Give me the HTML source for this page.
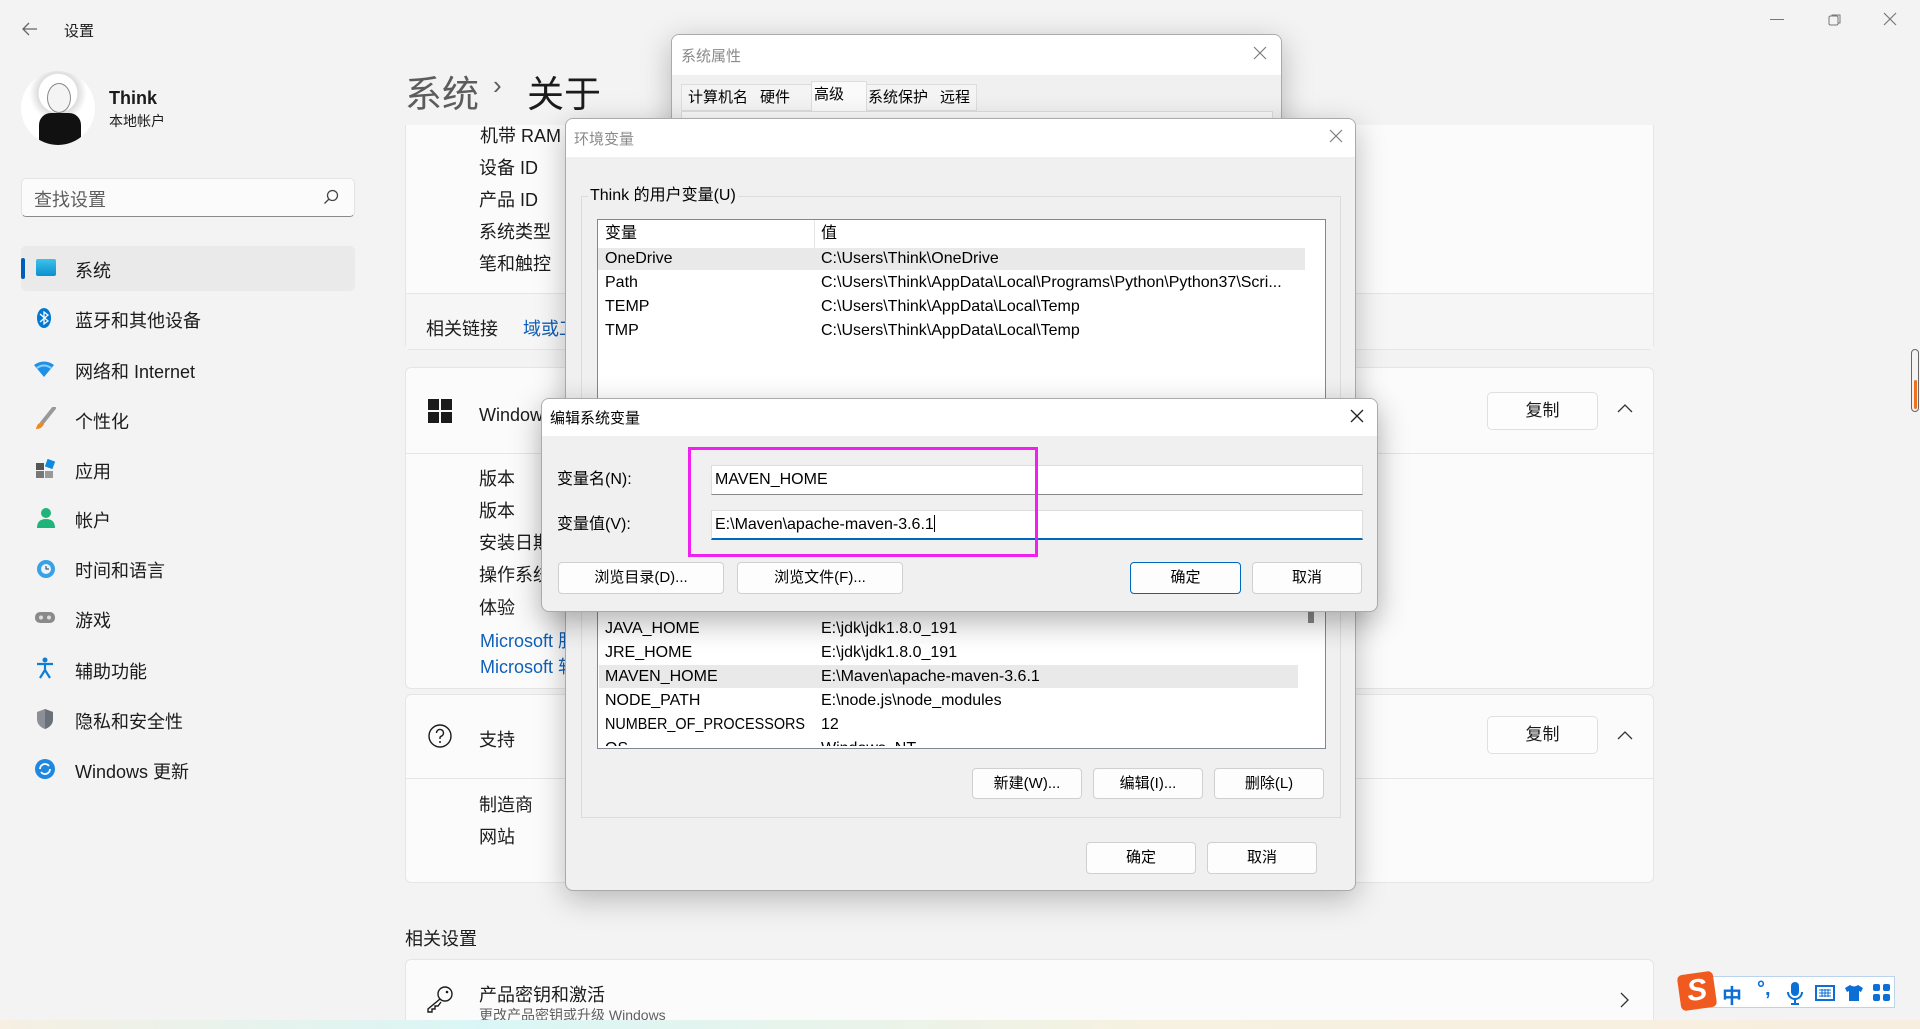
<!DOCTYPE html>
<html><head><meta charset="utf-8">
<style>
*{margin:0;padding:0;box-sizing:border-box}
html{overflow:hidden;width:1920px;height:1029px}
body{width:1920px;height:1029px;overflow:hidden;background:#f3f3f3;font-family:"Liberation Sans","Noto Sans CJK SC",sans-serif;color:#1b1b1b;position:relative}
.a{position:absolute;white-space:nowrap}
.card{position:absolute;background:#fbfbfb;border:1px solid #e5e5e5;border-radius:6px}
.t18{font-size:18px}
.nav{position:absolute;left:75px;font-size:18px}
.btnw{position:absolute;background:#fdfdfd;border:1px solid #e0e0e0;border-radius:5px;font-size:17px;text-align:center}
.dlg{position:absolute;background:#f0f0f0;border:1px solid #aaa;border-radius:8px;overflow:hidden;box-shadow:0 8px 30px rgba(0,0,0,.25)}
.tb{position:absolute;left:0;right:0;top:0;background:#fff}
.dt{font-size:16px;color:#000;line-height:20px}
.wb{position:absolute;background:#fdfdfd;border:1px solid #d0d0d0;border-radius:4px;font-size:15px;text-align:center;color:#000}
</style></head><body>

<!-- title bar -->
<svg class="a" style="left:22px;top:22px" width="16" height="14"><path d="M15 7H2M7 1L1 7l6 6" stroke="#666" stroke-width="1.3" fill="none"/></svg>
<div class="a" style="left:64px;top:20px;font-size:15px">设置</div>
<div class="a" style="left:1770px;top:19px;width:14px;height:1px;background:#777"></div>
<svg class="a" style="left:1828px;top:13px" width="14" height="14"><rect x="1" y="3" width="9" height="9" rx="1.5" fill="none" stroke="#777"/><path d="M4 3V2h8v8h-2" fill="none" stroke="#777"/></svg>
<svg class="a" style="left:1883px;top:12px" width="14" height="14"><path d="M1 1l12 12M13 1L1 13" stroke="#777" stroke-width="1.2"/></svg>

<!-- profile -->
<div class="a" style="left:21px;top:71px;width:74px;height:74px;border-radius:50%;background:radial-gradient(circle at 50% 30%,#fff 0 30%,#ddd 31%,#fff 45%),#eee;overflow:hidden">
<div style="position:absolute;left:18px;top:42px;width:42px;height:40px;background:#111;border-radius:12px 12px 0 0"></div>
<div style="position:absolute;left:26px;top:12px;width:24px;height:30px;background:#f4f4f4;border:1px solid #888;border-radius:50%"></div></div>
<div class="a" style="left:109px;top:88px;font-size:18px;font-weight:bold">Think</div>
<div class="a" style="left:109px;top:111px;font-size:14px">本地帐户</div>

<!-- search -->
<div class="a" style="left:21px;top:178px;width:334px;height:39px;background:#fbfbfb;border:1px solid #e3e3e3;border-bottom:1px solid #8a8a8a;border-radius:5px"></div>
<div class="a" style="left:34px;top:186px;font-size:18px;color:#5f5f5f">查找设置</div>
<svg class="a" style="left:323px;top:189px" width="16" height="16"><circle cx="9.5" cy="6.5" r="5" fill="none" stroke="#444" stroke-width="1.3"/><path d="M6 10L1.5 14.5" stroke="#444" stroke-width="1.3"/></svg>

<!-- nav -->
<div class="a" style="left:21px;top:246px;width:334px;height:45px;background:#eaeaea;border-radius:5px"></div>
<div class="a" style="left:21px;top:258px;width:4px;height:21px;background:#005fb8;border-radius:2px"></div>
<div class="a" style="left:36px;top:259px;width:20px;height:17px;background:linear-gradient(#3cc3e8,#0a8fd0);border-radius:2px"></div>
<div class="nav" style="top:257px">系统</div>
<svg class="a" style="left:36px;top:307px" width="16" height="22"><ellipse cx="8" cy="11" rx="7" ry="10" fill="#0078d4"/><path d="M4 7l8 7-4 3V5l4 3-8 7" stroke="#fff" stroke-width="1.3" fill="none"/></svg>
<div class="nav" style="top:307px">蓝牙和其他设备</div>
<svg class="a" style="left:33px;top:360px" width="22" height="18"><path d="M1 5Q11-2 21 5L11 17Z" fill="#1e90e8"/><path d="M4 8Q11 3 18 8" stroke="#8fd0ff" stroke-width="2" fill="none"/></svg>
<div class="nav" style="top:358px">网络和 Internet</div>
<svg class="a" style="left:34px;top:407px" width="22" height="24"><path d="M20 1L8 16" stroke="#999" stroke-width="4" stroke-linecap="round"/><path d="M8 15Q3 16 2 22Q8 22 10 17Z" fill="#f08a1e"/></svg>
<div class="nav" style="top:408px">个性化</div>
<svg class="a" style="left:36px;top:459px" width="20" height="20"><rect x="0" y="4" width="8" height="7" fill="#555"/><rect x="0" y="12" width="8" height="7" fill="#777"/><rect x="9" y="12" width="8" height="7" fill="#999"/><rect x="10" y="1" width="8" height="8" fill="#0a8ae0" transform="rotate(20 14 5)"/></svg>
<div class="nav" style="top:458px">应用</div>
<svg class="a" style="left:36px;top:507px" width="20" height="22"><circle cx="10" cy="6" r="5" fill="#1fb57a"/><path d="M1 21Q1 12 10 12Q19 12 19 21Z" fill="#1fb57a"/></svg>
<div class="nav" style="top:507px">帐户</div>
<svg class="a" style="left:35px;top:558px" width="22" height="22"><circle cx="11" cy="11" r="9" fill="#3aa0e8"/><circle cx="11" cy="11" r="5" fill="#e8f4ff"/><path d="M11 8v3h3" stroke="#333" fill="none"/></svg>
<div class="nav" style="top:557px">时间和语言</div>
<svg class="a" style="left:34px;top:610px" width="22" height="16"><rect x="1" y="2" width="20" height="11" rx="5" fill="#8a8a8a"/><circle cx="7" cy="7.5" r="2" fill="#ddd"/><circle cx="15" cy="7.5" r="2" fill="#ddd"/></svg>
<div class="nav" style="top:607px">游戏</div>
<svg class="a" style="left:35px;top:657px" width="20" height="22"><circle cx="10" cy="3" r="2.5" fill="#0a7ed8"/><path d="M2 7h16M10 7v6l-5 8M10 13l5 8" stroke="#0a7ed8" stroke-width="2.2" fill="none"/></svg>
<div class="nav" style="top:658px">辅助功能</div>
<svg class="a" style="left:36px;top:708px" width="18" height="22"><path d="M9 1L1 4v7q0 7 8 10q8-3 8-10V4Z" fill="#8a8f98"/><path d="M9 1v20q8-3 8-10V4Z" fill="#6b7079"/></svg>
<div class="nav" style="top:708px">隐私和安全性</div>
<svg class="a" style="left:34px;top:758px" width="22" height="22"><circle cx="11" cy="11" r="10" fill="#1e88e0"/><path d="M6 11a5 5 0 0 1 9-3M16 11a5 5 0 0 1-9 3" stroke="#fff" stroke-width="1.8" fill="none"/></svg>
<div class="nav" style="top:758px">Windows 更新</div>

<!-- card 1 -->
<div class="card" style="left:405px;top:125px;width:1249px;height:225px;border-top:none;border-radius:0 0 6px 6px;overflow:hidden">
<div class="a t18" style="left:74px;top:-3px">机带 RAM</div>
</div>
<div class="a" style="left:406px;top:293px;width:1247px;height:56px;background:#f6f6f6;border-top:1px solid #e5e5e5"></div>
<div class="a t18" style="left:479px;top:154px">设备 ID</div>
<div class="a t18" style="left:479px;top:186px">产品 ID</div>
<div class="a t18" style="left:479px;top:218px">系统类型</div>
<div class="a t18" style="left:479px;top:250px">笔和触控</div>
<div class="a t18" style="left:426px;top:315px">相关链接</div>
<div class="a t18" style="left:523px;top:315px;color:#0f5fb8">域或工作组</div>

<!-- heading -->
<div class="a" style="left:405px;top:64px;font-size:37px;color:#5c5c5c">系统</div>
<div class="a" style="left:493px;top:70px;font-size:26px;color:#5c5c5c">›</div>
<div class="a" style="left:527px;top:64px;font-size:37px;color:#1b1b1b">关于</div>

<!-- card 2 -->
<div class="card" style="left:405px;top:367px;width:1249px;height:322px"></div>
<div class="a" style="left:406px;top:453px;width:1247px;height:1px;background:#e5e5e5"></div>
<svg class="a" style="left:428px;top:399px" width="24" height="24"><rect x="0" y="0" width="11" height="11" fill="#1b1b1b"/><rect x="13" y="0" width="11" height="11" fill="#1b1b1b"/><rect x="0" y="13" width="11" height="11" fill="#1b1b1b"/><rect x="13" y="13" width="11" height="11" fill="#1b1b1b"/></svg>
<div class="a t18" style="left:479px;top:401px">Windows 规格</div>
<div class="btnw" style="left:1487px;top:392px;width:111px;height:38px;line-height:36px">复制</div>
<svg class="a" style="left:1617px;top:403px" width="16" height="10"><path d="M1 9l7-7 7 7" stroke="#333" stroke-width="1.3" fill="none"/></svg>
<div class="a t18" style="left:479px;top:465px">版本</div>
<div class="a t18" style="left:479px;top:497px">版本</div>
<div class="a t18" style="left:479px;top:529px">安装日期</div>
<div class="a t18" style="left:479px;top:561px">操作系统版本</div>
<div class="a t18" style="left:479px;top:594px">体验</div>
<div class="a t18" style="left:480px;top:627px;color:#0f5fb8">Microsoft 服务协议</div>
<div class="a t18" style="left:480px;top:653px;color:#0f5fb8">Microsoft 软件许可条款</div>

<!-- card 3 -->
<div class="card" style="left:405px;top:694px;width:1249px;height:189px"></div>
<div class="a" style="left:406px;top:778px;width:1247px;height:1px;background:#e5e5e5"></div>
<svg class="a" style="left:428px;top:724px" width="24" height="24"><circle cx="12" cy="12" r="11" fill="none" stroke="#1b1b1b" stroke-width="1.4"/><path d="M8.5 9a3.5 3.5 0 1 1 4.5 3.3c-.8.3-1 .8-1 1.7v1" stroke="#1b1b1b" stroke-width="1.4" fill="none"/><circle cx="12" cy="18" r="1" fill="#1b1b1b"/></svg>
<div class="a t18" style="left:479px;top:726px">支持</div>
<div class="btnw" style="left:1487px;top:716px;width:111px;height:38px;line-height:36px">复制</div>
<svg class="a" style="left:1617px;top:730px" width="16" height="10"><path d="M1 9l7-7 7 7" stroke="#333" stroke-width="1.3" fill="none"/></svg>
<div class="a t18" style="left:479px;top:791px">制造商</div>
<div class="a t18" style="left:479px;top:823px">网站</div>

<div class="a t18" style="left:405px;top:925px">相关设置</div>
<div class="card" style="left:405px;top:959px;width:1249px;height:62px;border-bottom:none;border-radius:6px 6px 0 0"></div>
<svg class="a" style="left:426px;top:985px" width="28" height="28"><circle cx="19" cy="9" r="7" fill="none" stroke="#1b1b1b" stroke-width="1.4"/><circle cx="21" cy="7" r="1.3" fill="#1b1b1b"/><path d="M14 14L2 24v3h4v-3h3v-3h3l3-4" stroke="#1b1b1b" stroke-width="1.4" fill="none"/></svg>
<div class="a t18" style="left:479px;top:981px">产品密钥和激活</div>
<div class="a" style="left:479px;top:1005px;font-size:14px;color:#5f5f5f">更改产品密钥或升级 Windows</div>
<svg class="a" style="left:1619px;top:992px" width="10" height="16"><path d="M2 1l7 7-7 7" stroke="#333" stroke-width="1.3" fill="none"/></svg>

<!-- scrollbar -->
<div class="a" style="left:1911px;top:349px;width:8px;height:63px;border:1.5px solid #666;border-radius:4px"></div>
<div class="a" style="left:1914px;top:380px;width:3px;height:29px;background:#f07020;border-radius:2px"></div>

<!-- IME bar -->
<div class="a" style="left:1700px;top:976px;width:195px;height:32px;background:#fff;border:1px solid #bcd3ee"></div>
<div class="a" style="left:1679px;top:973px;width:36px;height:36px;background:#f05a1e;border-radius:5px;transform:rotate(-8deg);color:#fff;font-weight:bold;font-size:30px;text-align:center;line-height:36px;font-style:italic">S</div>
<div class="a" style="left:1722px;top:980px;font-size:20px;color:#0b6fd6;font-weight:bold">中</div>
<div class="a" style="left:1757px;top:978px;font-size:20px;color:#0b6fd6;font-weight:bold">°,</div>
<svg class="a" style="left:1787px;top:982px" width="16" height="24"><rect x="4" y="0" width="8" height="14" rx="4" fill="#0b6fd6"/><path d="M1 10a7 7 0 0 0 14 0M8 17v4M4 22h8" stroke="#0b6fd6" stroke-width="2" fill="none"/></svg>
<svg class="a" style="left:1815px;top:985px" width="20" height="16"><rect x="1" y="1" width="18" height="14" fill="none" stroke="#0b6fd6" stroke-width="2"/><path d="M4 5h12M4 8h12M4 11h12M7 4v8M10 4v8M13 4v8" stroke="#0b6fd6"/></svg>
<svg class="a" style="left:1844px;top:984px" width="20" height="18"><path d="M6 1L1 4l2 4 2-1v10h10V7l2 1 2-4-5-3q-4 3-8 0Z" fill="#0b6fd6"/></svg>
<svg class="a" style="left:1873px;top:984px" width="18" height="18"><rect x="0" y="0" width="7" height="7" rx="2" fill="#0b6fd6"/><rect x="10" y="0" width="7" height="7" rx="2" fill="#0b6fd6"/><rect x="0" y="10" width="7" height="7" rx="2" fill="#0b6fd6"/><rect x="10" y="10" width="7" height="7" rx="2" fill="#0b6fd6"/></svg>
<div class="a" style="left:0;top:1020px;width:1920px;height:9px;background:linear-gradient(90deg,#f6efe2,#d9f6f6 25%,#f6f1e0 60%,#f8eedf)"></div>

<!-- 系统属性 -->
<div class="dlg" style="left:671px;top:34px;width:611px;height:300px">
<div class="tb" style="height:40px"></div>
<div class="a" style="left:9px;top:10px;font-size:15px;color:#8a8a8a">系统属性</div>
<svg class="a" style="left:581px;top:11px" width="14" height="14"><path d="M1 1l12 12M13 1L1 13" stroke="#777" stroke-width="1.1"/></svg>
<div class="a" style="left:9px;top:49px;width:296px;height:27px;background:#f4f4f4;border:1px solid #ddd"></div>
<div class="a" style="left:139px;top:46px;width:56px;height:31px;background:#fafafa;border:1px solid #ddd;border-bottom:none"></div>
<div class="a dt" style="left:16px;top:53px;font-size:15px">计算机名</div>
<div class="a dt" style="left:88px;top:53px;font-size:15px">硬件</div>
<div class="a dt" style="left:142px;top:50px;font-size:15px">高级</div>
<div class="a dt" style="left:196px;top:53px;font-size:15px">系统保护</div>
<div class="a dt" style="left:268px;top:53px;font-size:15px">远程</div>
<div class="a" style="left:9px;top:76px;width:592px;height:230px;background:#fafafa;border:1px solid #ddd"></div>
</div>

<!-- 环境变量 -->
<div class="dlg" style="left:565px;top:118px;width:791px;height:773px">
<div class="tb" style="height:38px"></div>
<div class="a" style="left:8px;top:9px;font-size:15px;color:#8a8a8a">环境变量</div>
<svg class="a" style="left:763px;top:10px" width="14" height="14"><path d="M1 1l12 12M13 1L1 13" stroke="#777" stroke-width="1.1"/></svg>
<div class="a" style="left:15px;top:77px;width:760px;height:622px;border:1px solid #dcdcdc"></div>
<div class="a dt" style="left:22px;top:67px;background:#f0f0f0;padding:0 2px">Think 的用户变量(U)</div>
<div class="a" style="left:31px;top:100px;width:729px;height:400px;background:#fff;border:1px solid #828790"></div>
<div class="a" style="left:248px;top:101px;width:1px;height:28px;background:#e5e5e5"></div>
<div class="a dt" style="left:39px;top:105px">变量</div>
<div class="a dt" style="left:255px;top:105px">值</div>
<div class="a" style="left:32px;top:129px;width:707px;height:22px;background:#e9e9e9"></div>
<div class="a dt" style="left:39px;top:130px">OneDrive</div><div class="a dt" style="left:255px;top:130px">C:\Users\Think\OneDrive</div>
<div class="a dt" style="left:39px;top:154px">Path</div><div class="a dt" style="left:255px;top:154px">C:\Users\Think\AppData\Local\Programs\Python\Python37\Scri...</div>
<div class="a dt" style="left:39px;top:178px">TEMP</div><div class="a dt" style="left:255px;top:178px">C:\Users\Think\AppData\Local\Temp</div>
<div class="a dt" style="left:39px;top:202px">TMP</div><div class="a dt" style="left:255px;top:202px">C:\Users\Think\AppData\Local\Temp</div>
<!-- system list -->
<div class="a" style="left:31px;top:480px;width:729px;height:150px;background:#fff;border:1px solid #828790;border-top:none;overflow:hidden">
<div class="a" style="left:710px;top:10px;width:6px;height:14px;background:#888"></div>
<div class="a" style="left:0;top:0;width:700px;height:147px;overflow:hidden">
<div class="a dt" style="left:7px;top:20px">JAVA_HOME</div><div class="a dt" style="left:223px;top:20px">E:\jdk\jdk1.8.0_191</div>
<div class="a dt" style="left:7px;top:44px">JRE_HOME</div><div class="a dt" style="left:223px;top:44px">E:\jdk\jdk1.8.0_191</div>
<div class="a" style="left:1px;top:66px;width:700px;height:23px;background:#e9e9e9"></div>
<div class="a dt" style="left:7px;top:68px">MAVEN_HOME</div><div class="a dt" style="left:223px;top:68px">E:\Maven\apache-maven-3.6.1</div>
<div class="a dt" style="left:7px;top:92px">NODE_PATH</div><div class="a dt" style="left:223px;top:92px">E:\node.js\node_modules</div>
<div class="a dt" style="left:7px;top:116px;transform:scaleX(.9);transform-origin:left">NUMBER_OF_PROCESSORS</div><div class="a dt" style="left:223px;top:116px">12</div>
<div class="a dt" style="left:7px;top:140px">OS</div><div class="a dt" style="left:223px;top:140px">Windows_NT</div>
</div></div>
<div class="wb" style="left:406px;top:649px;width:110px;height:31px;line-height:29px">新建(W)...</div>
<div class="wb" style="left:527px;top:649px;width:110px;height:31px;line-height:29px">编辑(I)...</div>
<div class="wb" style="left:648px;top:649px;width:110px;height:31px;line-height:29px">删除(L)</div>
<div class="wb" style="left:520px;top:723px;width:110px;height:32px;line-height:30px">确定</div>
<div class="wb" style="left:641px;top:723px;width:110px;height:32px;line-height:30px">取消</div>
</div>

<!-- 编辑系统变量 -->
<div class="dlg" style="left:541px;top:398px;width:837px;height:214px;box-shadow:0 10px 30px rgba(0,0,0,.3)">
<div class="tb" style="height:37px"></div>
<div class="a" style="left:8px;top:8px;font-size:15px;color:#000">编辑系统变量</div>
<svg class="a" style="left:808px;top:10px" width="14" height="14"><path d="M1 1l12 12M13 1L1 13" stroke="#222" stroke-width="1.3"/></svg>
<div class="a dt" style="left:15px;top:71px">变量名(N):</div>
<div class="a dt" style="left:15px;top:116px">变量值(V):</div>
<div class="a" style="left:169px;top:66px;width:652px;height:30px;background:#fff;border:1px solid #ddd;border-bottom:1px solid #888"></div>
<div class="a dt" style="left:173px;top:71px">MAVEN_HOME</div>
<div class="a" style="left:169px;top:111px;width:652px;height:30px;background:#fff;border:1px solid #ddd;border-bottom:2px solid #0067c0"></div>
<div class="a dt" style="left:173px;top:116px">E:\Maven\apache-maven-3.6.1<span style="display:inline-block;width:1px;height:17px;background:#000;vertical-align:-3px"></span></div>
<div class="a" style="left:146px;top:48px;width:350px;height:110px;border:3px solid #f020f0"></div>
<div class="wb" style="left:16px;top:163px;width:166px;height:32px;line-height:30px">浏览目录(D)...</div>
<div class="wb" style="left:195px;top:163px;width:166px;height:32px;line-height:30px">浏览文件(F)...</div>
<div class="wb" style="left:588px;top:163px;width:111px;height:32px;line-height:30px;border-color:#0067c0">确定</div>
<div class="wb" style="left:710px;top:163px;width:110px;height:32px;line-height:30px">取消</div>
</div>

</body></html>
